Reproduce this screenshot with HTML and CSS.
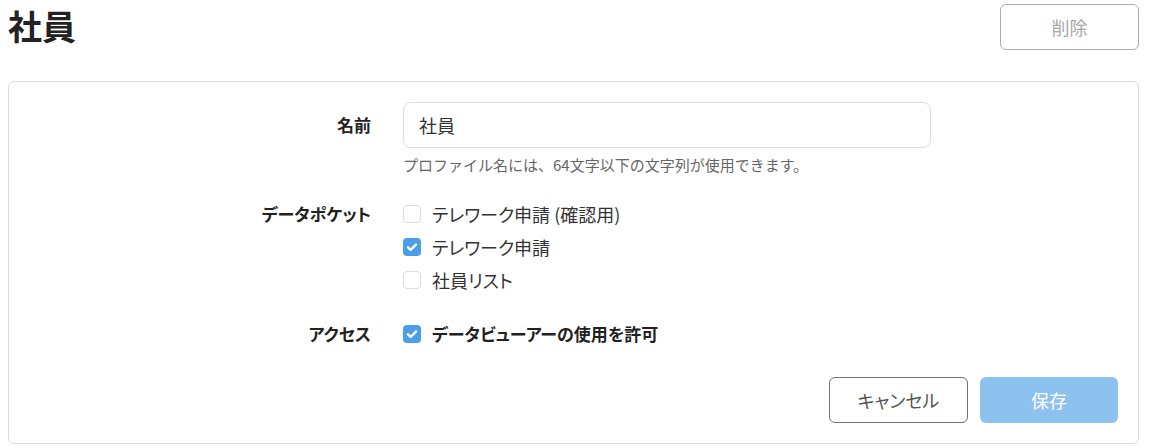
FILE: index.html
```html
<!DOCTYPE html>
<html lang="ja">
<head>
<meta charset="utf-8">
<title>社員</title>
<link rel="stylesheet" href="styles.css">
</head>
<body>
<div class="page">
  <header class="header">
    <h1 class="title">社員</h1>
    <button class="btn btn-delete" type="button">削除</button>
  </header>
  <section class="card">
    <div class="row row-name">
      <div class="label label-name">名前</div>
      <div class="field">
        <input class="text-input" type="text" value="社員">
        <div class="help">プロファイル名には、64文字以下の文字列が使用できます。</div>
      </div>
    </div>
    <div class="row">
      <div class="label">データポケット</div>
      <div class="field">
        <label class="check"><span class="box"></span><span class="check-text">テレワーク申請 (確認用)</span></label>
        <label class="check"><span class="box checked"><svg viewBox="0 0 18 18" width="18" height="18"><path d="M5 9.3l2.6 2.5L13 6.6" fill="none" stroke="#fff" stroke-width="2.4" stroke-linecap="round" stroke-linejoin="round"/></svg></span><span class="check-text">テレワーク申請</span></label>
        <label class="check"><span class="box"></span><span class="check-text">社員リスト</span></label>
      </div>
    </div>
    <div class="row">
      <div class="label">アクセス</div>
      <div class="field">
        <label class="check"><span class="box checked"><svg viewBox="0 0 18 18" width="18" height="18"><path d="M5 9.3l2.6 2.5L13 6.6" fill="none" stroke="#fff" stroke-width="2.4" stroke-linecap="round" stroke-linejoin="round"/></svg></span><span class="check-text strong">データビューアーの使用を許可</span></label>
      </div>
    </div>
    <div class="actions">
      <button class="btn btn-cancel" type="button">キャンセル</button>
      <button class="btn btn-save" type="button">保存</button>
    </div>
  </section>
</div>
</body>
</html>
```
FILE: styles.css
```css
* { box-sizing: border-box; }
html, body { margin: 0; padding: 0; background: #fff; }
body {
  font-family: "Noto Sans CJK JP", "Noto Sans", sans-serif;
  color: #222;
  font-feature-settings: "palt";
}
.page { padding: 0 14px 0 8px; }
.header {
  height: 54px;
  display: flex;
  align-items: center;
  justify-content: space-between;
}
.title {
  margin: 0;
  font-size: 34px;
  font-weight: 700;
  line-height: 40px;
  color: #222;
  position: relative;
  top: -1px;
}
.btn {
  font-family: inherit;
  font-feature-settings: "palt";
  font-size: 18px;
  height: 46px;
  border-radius: 6px;
  background: #fff;
  cursor: pointer;
  padding: 0;
}
.btn-delete {
  width: 139px;
  border: 1px solid #a9adb2;
  color: #a8a8a8;
}
.card {
  margin-top: 27px;
  border: 1px solid #dcdcdc;
  border-radius: 6px;
  padding: 20px 20px 20px 0;
  display: flex;
  flex-direction: column;
  gap: 21px;
}
.row {
  display: flex;
  column-gap: 32px;
}
.label {
  width: 362px;
  flex: none;
  text-align: right;
  font-size: 17px;
  font-weight: 700;
  line-height: 33px;
  color: #222;
}
.label-name { line-height: 46px; }
.field { display: flex; flex-direction: column; }
.text-input {
  width: 528px;
  height: 46px;
  border: 1px solid #dedede;
  border-radius: 8px;
  padding: 0 15px;
  font-family: inherit;
  font-feature-settings: "palt";
  font-size: 18px;
  color: #333;
  outline: none;
}
.help {
  margin-top: 6px;
  font-size: 15px;
  line-height: 22px;
  color: #666;
  font-feature-settings: normal;
}
.check {
  display: flex;
  align-items: center;
  height: 33px;
  gap: 11px;
  font-size: 18px;
  color: #333;
}
.box {
  width: 18px;
  height: 18px;
  border: 1px solid #dcdcdc;
  border-radius: 4px;
  background: #fff;
  display: flex;
  flex: none;
}
.box.checked {
  border: none;
  background: #4a9fe8;
}
.box svg { display: block; }
.check-text.strong { font-weight: 700; font-size: 17px; color: #222; }
.actions {
  display: flex;
  justify-content: flex-end;
  gap: 12px;
  margin-top: 6px;
}
.btn-cancel {
  width: 139px;
  border: 1px solid #6c7178;
  color: #555;
}
.btn-save {
  width: 138px;
  border: none;
  background: #8dc1ef;
  color: #fff;
}
```
